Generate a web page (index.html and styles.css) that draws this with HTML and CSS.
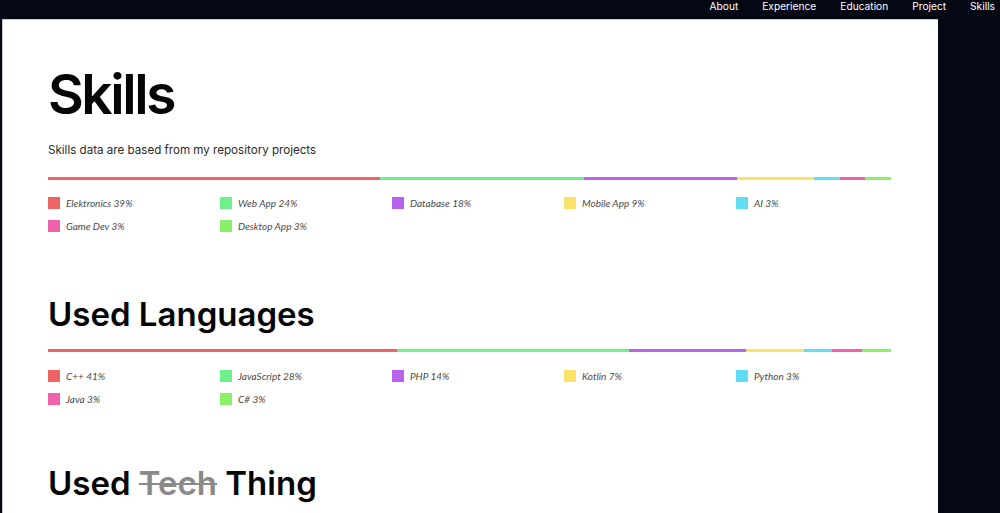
FILE: index.html
```html
<!DOCTYPE html>
<html lang="en">
<head>
<meta charset="utf-8">
<title>Skills</title>
<link rel="stylesheet" href="styles.css">
</head>
<body>
<nav class="nav">
  <a href="#">About</a>
  <a href="#">Experience</a>
  <a href="#">Education</a>
  <a href="#">Project</a>
  <a href="#">Skills</a>
</nav>
<main class="panel">
  <section class="section section-skills">
    <h1 class="title">Skills</h1>
    <p class="subtitle">Skills data are based from my repository projects</p>
    <div class="bar">
      <span class="seg red" style="width:332px"></span>
      <span class="seg green" style="width:204px"></span>
      <span class="seg purple" style="width:153px"></span>
      <span class="seg yellow" style="width:77px"></span>
      <span class="seg cyan" style="width:26px"></span>
      <span class="seg pink" style="width:25px"></span>
      <span class="seg lime" style="width:26px"></span>
    </div>
    <ul class="legend">
      <li><i class="sw red"></i>Elektronics 39%</li>
      <li><i class="sw green"></i>Web App 24%</li>
      <li><i class="sw purple"></i>Database 18%</li>
      <li><i class="sw yellow"></i>Mobile App 9%</li>
      <li><i class="sw cyan"></i>AI 3%</li>
      <li><i class="sw pink"></i>Game Dev 3%</li>
      <li><i class="sw lime"></i>Desktop App 3%</li>
    </ul>
  </section>
  <section class="section section-lang">
    <h2 class="heading">Used Languages</h2>
    <div class="bar bar-lang">
      <span class="seg red" style="width:349px"></span>
      <span class="seg green" style="width:232px"></span>
      <span class="seg purple" style="width:117px"></span>
      <span class="seg yellow" style="width:58px"></span>
      <span class="seg cyan" style="width:28px"></span>
      <span class="seg pink" style="width:30px"></span>
      <span class="seg lime" style="width:29px"></span>
    </div>
    <ul class="legend legend-lang">
      <li><i class="sw red"></i>C++ 41%</li>
      <li><i class="sw green"></i>JavaScript 28%</li>
      <li><i class="sw purple"></i>PHP 14%</li>
      <li><i class="sw yellow"></i>Kotlin 7%</li>
      <li><i class="sw cyan"></i>Python 3%</li>
      <li><i class="sw pink"></i>Java 3%</li>
      <li><i class="sw lime"></i>C# 3%</li>
    </ul>
  </section>
  <section class="section section-tech">
    <h2 class="heading">Used <s class="strike">Tech</s> Thing</h2>
  </section>
</main>
</body>
</html>
```

FILE: styles.css
```css
* { box-sizing: border-box; }
html, body { margin: 0; padding: 0; }
body {
  background: #040813;
  font-family: Inter, "Noto Sans", sans-serif;
  height: 513px;
  overflow: hidden;
}
.nav {
  height: 19px;
  display: flex;
  justify-content: flex-end;
  align-items: flex-start;
  gap: 24px;
  padding-right: 5px;
}
.nav a {
  color: #ffffff;
  text-decoration: none;
  font-size: 10.2px;
  line-height: 13px;
  font-weight: 400;
}
.panel {
  margin-left: 2px;
  width: 936px;
  background: #ffffff;
  border-top: 1px solid #c8c8c8;
  border-left: 1px solid #c8c8c8;
  padding: 47px 0 60px 45px;
  min-height: 494px;
}
.title {
  margin: 0;
  font-size: 55px;
  line-height: 55px;
  font-weight: 600;
  color: #050505;
  letter-spacing: -2.4px;
}
.subtitle {
  margin: 20px 0 0;
  font-size: 11.6px;
  line-height: 16px;
  color: #2a2a2a;
}
.bar {
  margin-top: 19px;
  width: 843px;
  height: 3px;
  display: flex;
}
.seg { display: block; height: 100%; }
.red { background: #ee6464; }
.green { background: #6ef08c; }
.purple { background: #b863ee; }
.yellow { background: #fbe36a; }
.cyan { background: #62dcf2; }
.pink { background: #f262ac; }
.lime { background: #8af06a; }
.legend {
  list-style: none;
  margin: 17px 0 0;
  padding: 0;
  display: grid;
  grid-template-columns: repeat(5, 172px);
  row-gap: 11px;
}
.legend li {
  display: flex;
  align-items: center;
  height: 12px;
  font-family: Lato, "Noto Sans", sans-serif;
  font-style: italic;
  font-size: 10px;
  color: #4a4a4a;
}
.sw {
  width: 12px;
  height: 12px;
  margin-right: 6px;
  flex: none;
}
.heading {
  margin: 0;
  font-size: 33px;
  line-height: 32px;
  font-weight: 600;
  color: #050505;
  letter-spacing: 0;
}
.section-lang { margin-top: 66px; }
.bar-lang { margin-top: 19px; }
.legend-lang { margin-top: 18px; }
.section-tech { margin-top: 62px; }
.strike {
  color: #8a8a8a;
  text-decoration: line-through;
  text-decoration-thickness: 2px;
}
```
